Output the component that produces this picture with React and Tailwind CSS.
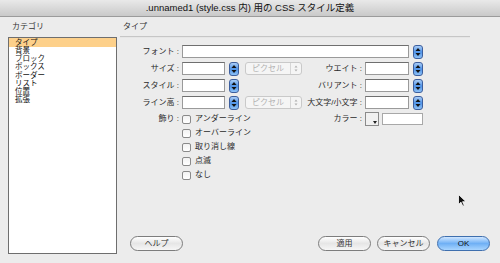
import React from 'react'

const font = 'font-["Liberation_Sans","Noto_Sans_CJK_JP",sans-serif]'

function Spinner() {
  return (
    <div className="w-[10px] h-[14px] rounded-[3px] border border-[#3d5f9e] bg-gradient-to-b from-[#a9cdf7] via-[#4f93e8] to-[#8cc0f5] flex items-center justify-center shrink-0">
      <svg width="6" height="10" viewBox="0 0 6 10">
        <path d="M3 1 L5.5 4 L0.5 4 Z" fill="#111" />
        <path d="M3 9 L5.5 6 L0.5 6 Z" fill="#111" />
      </svg>
    </div>
  )
}

function Field({ w }) {
  return <div className={`h-[13px] ${w} bg-white border border-[#9a9a9a] border-t-[#6f6f6f] shrink-0`} />
}

function Popup() {
  return (
    <div className="ml-[6px] w-[57px] h-[13px] rounded-[3px] border border-[#c9c9c9] bg-[#f5f5f5] flex items-center shrink-0">
      <span className="pl-[6px] text-[8px] leading-none text-[#b3b3b3] flex-1">ピクセル</span>
      <div className="w-[11px] h-full border-l border-[#d6d6d6] flex items-center justify-center">
        <svg width="4" height="7" viewBox="0 0 4 7">
          <path d="M2 0.5 L3.5 2.5 L0.5 2.5 Z" fill="#b0b0b0" />
          <path d="M2 6.5 L3.5 4.5 L0.5 4.5 Z" fill="#b0b0b0" />
        </svg>
      </div>
    </div>
  )
}

function Label({ children, w = 'w-[62px]' }) {
  return (
    <div className={`${w} shrink-0 text-right pr-[3px] text-[8px] leading-none text-[#2a2a2a] whitespace-nowrap`}>
      {children}
    </div>
  )
}

function Check({ label }) {
  return (
    <div className="h-[14px] flex items-center">
      <div className="w-[9px] h-[9px] rounded-[2px] border border-[#8a8a8a] bg-gradient-to-b from-[#f2f2f2] to-white" />
      <span className="ml-[4px] text-[8px] leading-none text-[#2a2a2a]">{label}</span>
    </div>
  )
}

function Button({ children, primary }) {
  return (
    <div
      className={`w-[53px] h-[15px] rounded-full border flex items-center justify-center text-[8px] leading-none ${
        primary
          ? 'border-[#3f6fae] bg-gradient-to-b from-[#cfe6ff] via-[#6fb0f5] to-[#a9d5ff] text-[#111]'
          : 'border-[#7d7d7d] bg-gradient-to-b from-white via-[#e6e6e6] to-[#f6f6f6] text-[#333]'
      }`}
    >
      {children}
    </div>
  )
}

export default function App() {
  const categories = ['タイプ', '背景', 'ブロック', 'ボックス', 'ボーダー', 'リスト', '位置', '拡張']

  return (
    <div className={`w-[500px] h-[263px] bg-[#ececec] relative overflow-hidden ${font}`}>
      {/* Title bar */}
      <div className="h-[17px] bg-gradient-to-b from-[#e9e9e9] to-[#c9c9c9] border-b border-[#9b9b9b] flex items-center justify-center text-[9.5px] text-[#111]">
        .unnamed1 (style.css 内) 用の CSS スタイル定義
      </div>

      <div className="flex pt-[5px]">
        {/* Category list */}
        <div className="pl-[8px] w-[120px] shrink-0">
          <div className="pl-[4px] h-[10px] text-[8px] leading-[10px] text-[#333]">カテゴリ</div>
          <div className="mt-[5px] w-[109px] h-[217px] bg-white border border-[#6e6e6e]">
            {categories.map((c, i) => (
              <div
                key={c}
                className={`pl-[6px] text-[7.5px] text-[#111] ${
                  i === 0 ? 'bg-[#fdd08a] h-[9px] leading-[9px]' : 'h-[8.2px] leading-[8.2px]'
                }`}
              >
                {c}
              </div>
            ))}
          </div>
        </div>

        {/* Type panel */}
        <div className="w-[350px]">
          <div className="pl-[3px] h-[10px] text-[8px] leading-[10px] text-[#333]">タイプ</div>
          <div className="mt-[4px] h-[2px] bg-[#c6c6c6] border-b border-[#e6e6e6]" />

          <div className="mt-[7px] flex flex-col gap-[4px]">
            <div className="flex items-center h-[13px]">
              <Label>フォント :</Label>
              <Field w="w-[227px]" />
              <div className="ml-[4px]"><Spinner /></div>
            </div>

            <div className="flex items-center h-[13px]">
              <Label>サイズ :</Label>
              <Field w="w-[43px]" />
              <div className="ml-[4px]"><Spinner /></div>
              <Popup />
              <Label w="w-[63px]">ウエイト :</Label>
              <Field w="w-[44px]" />
              <div className="ml-[4px]"><Spinner /></div>
            </div>

            <div className="flex items-center h-[13px]">
              <Label>スタイル :</Label>
              <Field w="w-[43px]" />
              <div className="ml-[4px]"><Spinner /></div>
              <div className="ml-[6px] w-[57px] shrink-0" />
              <Label w="w-[63px]">バリアント :</Label>
              <Field w="w-[44px]" />
              <div className="ml-[4px]"><Spinner /></div>
            </div>

            <div className="flex items-center h-[13px]">
              <Label>ライン高 :</Label>
              <Field w="w-[43px]" />
              <div className="ml-[4px]"><Spinner /></div>
              <Popup />
              <Label w="w-[63px]">大文字/小文字 :</Label>
              <Field w="w-[44px]" />
              <div className="ml-[4px]"><Spinner /></div>
            </div>
          </div>

          {/* Decoration + colour */}
          <div className="mt-[3px] flex">
            <div className="pt-[3px]"><Label>飾り :</Label></div>
            <div className="w-[120px] shrink-0">
              {['アンダーライン', 'オーバーライン', '取り消し線', '点滅', 'なし'].map((d) => (
                <Check key={d} label={d} />
              ))}
            </div>
            <div className="flex items-center h-[14px]">
              <Label w="w-[63px]">カラー :</Label>
              <div className="w-[14px] h-[14px] border border-[#8a8a8a] bg-[#f0f0f0] relative shrink-0">
                <svg className="absolute right-[1px] bottom-[1px]" width="4" height="3" viewBox="0 0 4 3">
                  <path d="M0 0 L4 0 L2 3 Z" fill="#222" />
                </svg>
              </div>
              <div className="ml-[3px] w-[41px] h-[12px] bg-white border border-[#a8a8a8] shrink-0" />
            </div>
          </div>
        </div>
      </div>

      {/* Buttons */}
      <div className="absolute left-[130px] right-[10px] top-[236px] flex items-center">
        <Button>ヘルプ</Button>
        <div className="flex-1" />
        <Button>適用</Button>
        <div className="ml-[6px]"><Button>キャンセル</Button></div>
        <div className="ml-[7px]"><Button primary>OK</Button></div>
      </div>

      {/* Mouse pointer */}
      <svg className="absolute left-[458px] top-[194px]" width="9" height="13" viewBox="0 0 9 13">
        <path d="M0.5 0.5 L0.5 10.5 L3 8.2 L4.8 12.2 L6.3 11.5 L4.6 7.7 L8 7.7 Z" fill="#111" stroke="#fff" strokeWidth="0.8" />
      </svg>
    </div>
  )
}
